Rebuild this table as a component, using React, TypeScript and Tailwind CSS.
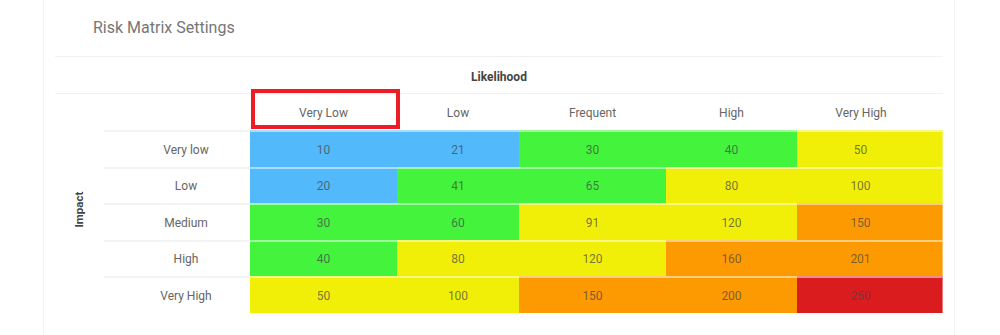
import React from 'react';

type Level = 'blue' | 'green' | 'yellow' | 'orange' | 'red';

const levelClass: Record<Level, string> = {
  blue: 'bg-[#52b9fb]',
  green: 'bg-[#43f33c]',
  yellow: 'bg-[#f1ef07]',
  orange: 'bg-[#fd9a01]',
  red: 'bg-[#da1c1f]',
};

const likelihood = ['Very Low', 'Low', 'Frequent', 'High', 'Very High'];

const rows: { label: string; cells: [number, Level][] }[] = [
  { label: 'Very low', cells: [[10, 'blue'], [21, 'blue'], [30, 'green'], [40, 'green'], [50, 'yellow']] },
  { label: 'Low', cells: [[20, 'blue'], [41, 'green'], [65, 'green'], [80, 'yellow'], [100, 'yellow']] },
  { label: 'Medium', cells: [[30, 'green'], [60, 'green'], [91, 'yellow'], [120, 'yellow'], [150, 'orange']] },
  { label: 'High', cells: [[40, 'green'], [80, 'yellow'], [120, 'yellow'], [160, 'orange'], [201, 'orange']] },
  { label: 'Very High', cells: [[50, 'yellow'], [100, 'yellow'], [150, 'orange'], [200, 'orange'], [250, 'red']] },
];

export default function App() {
  return (
    <div className="w-full h-[335px] bg-white overflow-hidden font-['Roboto','Liberation_Sans',sans-serif]">
      <div className="ml-[43px] w-[912px] h-full border-x border-[#f4f4f4] px-[11px]">
        {/* Title */}
        <div className="h-[56px] flex items-center pl-[38px]">
          <h2 className="text-[16px] text-[#767676] font-normal">Risk Matrix Settings</h2>
        </div>

        {/* Matrix */}
        <div className="relative grid grid-cols-[49px_146px_147px_122px_147px_131px_146px]">
          <div className="col-span-7 h-[38px] border-y border-[#f2f2f2] flex items-center justify-center pt-[3px] text-[12px] font-bold text-[#444]">
            Likelihood
          </div>

          {/* Impact label */}
          <div className="row-span-6 flex items-center justify-center pt-[12px]">
            <span className="-rotate-90 text-[11.5px] font-bold text-[#444] whitespace-nowrap">Impact</span>
          </div>

          {/* Column headers */}
          <div className="h-[36px]" />
          {likelihood.map((l, i) => (
            <div
              key={l}
              className={`h-[36px] flex items-center justify-center pt-[1px] text-[12px] text-[#666] ${i === 4 ? 'pr-[18px]' : ''}`}
            >
              {l}
            </div>
          ))}

          {rows.map((r) => (
            <React.Fragment key={r.label}>
              <div className="h-[36.5px] border-t-2 border-[#f3f3f3] flex items-center justify-center pl-[18px] pt-[1px] text-[12px] text-[#666]">
                {r.label}
              </div>
              {r.cells.map(([v, lvl], i) => (
                <div
                  key={i}
                  className={`h-[36.5px] border-t-2 border-white/50 flex items-center justify-center pt-[1px] text-[12px] text-[rgba(70,70,70,0.72)] ${levelClass[lvl]} ${i === 4 ? 'pr-[18px] border-r border-r-white/40' : ''}`}
                >
                  {v}
                </div>
              ))}
            </React.Fragment>
          ))}

          {/* Highlight box */}
          <div className="absolute left-[196px] top-[33px] w-[149px] h-[40px] border-4 border-[#ee1c25] pointer-events-none" />
        </div>
      </div>
    </div>
  );
}
